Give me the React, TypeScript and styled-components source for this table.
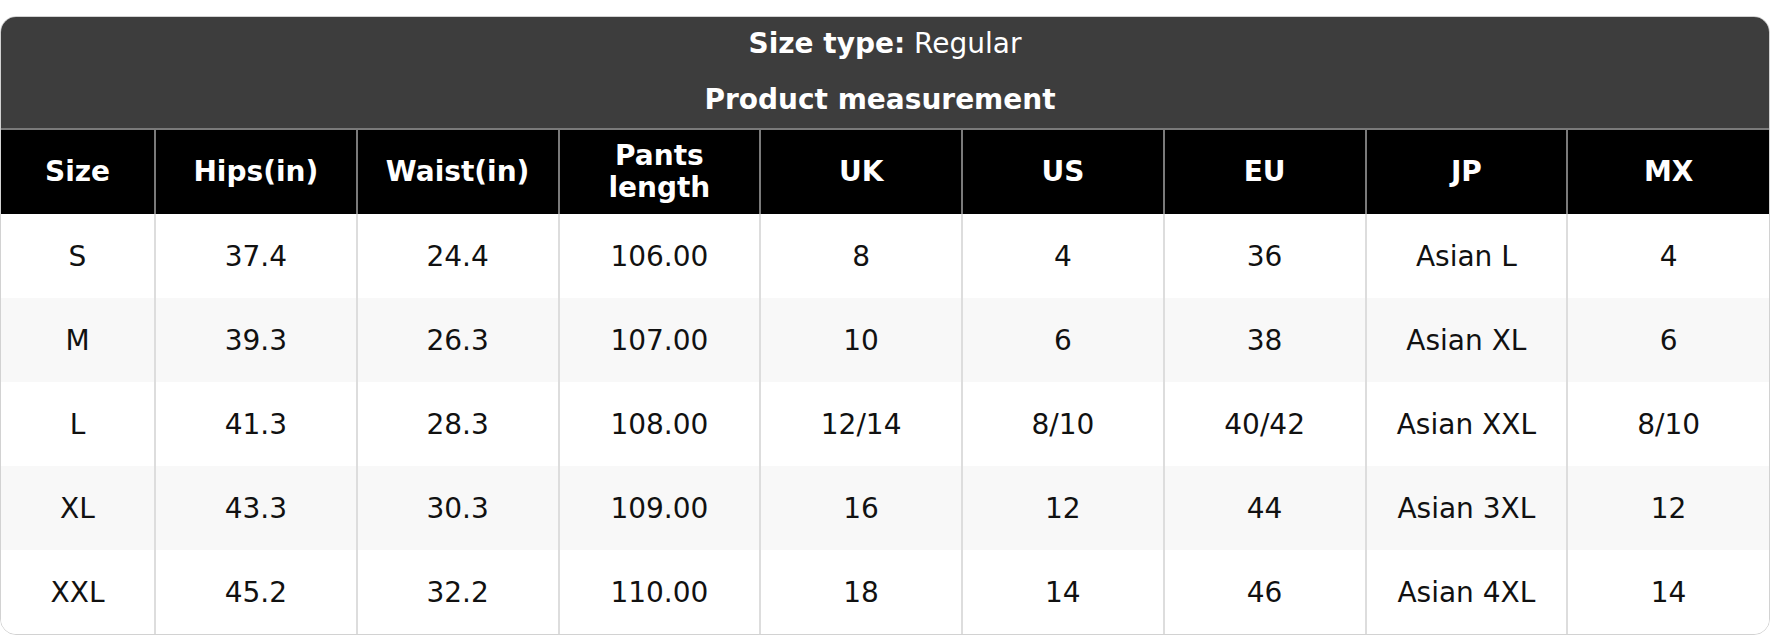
import styled, { createGlobalStyle } from "styled-components";

const GlobalStyle = createGlobalStyle`
  body {
    margin: 0;
    background: #ffffff;
    font-family: "DejaVu Sans", "Liberation Sans", sans-serif;
  }
`;

interface SizeRow {
  size: string;
  hips: string;
  waist: string;
  length: string;
  uk: string;
  us: string;
  eu: string;
  jp: string;
  mx: string;
}

const columns = ["Size", "Hips(in)", "Waist(in)", "Pants length", "UK", "US", "EU", "JP", "MX"];

const rows: SizeRow[] = [
  { size: "S", hips: "37.4", waist: "24.4", length: "106.00", uk: "8", us: "4", eu: "36", jp: "Asian L", mx: "4" },
  { size: "M", hips: "39.3", waist: "26.3", length: "107.00", uk: "10", us: "6", eu: "38", jp: "Asian XL", mx: "6" },
  { size: "L", hips: "41.3", waist: "28.3", length: "108.00", uk: "12/14", us: "8/10", eu: "40/42", jp: "Asian XXL", mx: "8/10" },
  { size: "XL", hips: "43.3", waist: "30.3", length: "109.00", uk: "16", us: "12", eu: "44", jp: "Asian 3XL", mx: "12" },
  { size: "XXL", hips: "45.2", waist: "32.2", length: "110.00", uk: "18", us: "14", eu: "46", jp: "Asian 4XL", mx: "14" },
];

export default function App() {
  return (
    <Page>
      <GlobalStyle />
      <Card>
        <TitleBar>
          <TitleLine>
            <strong>Size type:</strong> Regular
          </TitleLine>
          <TitleLine $bold $shift={10}>Product measurement</TitleLine>
        </TitleBar>
        <Table>
          <colgroup>
            <col style={{ width: 154 }} />
            {columns.slice(1).map((c) => (
              <col key={c} />
            ))}
          </colgroup>
          <thead>
            <tr>
              {columns.map((c) => (
                <Th key={c}>{c === "Pants length" ? <>Pants<br />length</> : c}</Th>
              ))}
            </tr>
          </thead>
          <tbody>
            {rows.map((r, i) => (
              <Tr key={r.size} $striped={i % 2 === 1}>
                <Td>{r.size}</Td>
                <Td>{r.hips}</Td>
                <Td>{r.waist}</Td>
                <Td>{r.length}</Td>
                <Td>{r.uk}</Td>
                <Td>{r.us}</Td>
                <Td>{r.eu}</Td>
                <Td>{r.jp}</Td>
                <Td>{r.mx}</Td>
              </Tr>
            ))}
          </tbody>
        </Table>
      </Card>
    </Page>
  );
}

const Page = styled.div`
  padding-top: 16px;
  width: 1770px;
`;

const Card = styled.div`
  border: 1px solid #d2d2d2;
  border-radius: 16px;
  overflow: hidden;
  background: #ffffff;
`;

const TitleBar = styled.div`
  background: #3d3d3d;
  color: #ffffff;
  text-align: center;
  padding: 10px 0 11px;
  display: flex;
  flex-direction: column;
  gap: 22px;
`;

const TitleLine = styled.div<{ $bold?: boolean; $shift?: number }>`
  font-size: 28px;
  line-height: 34px;
  font-weight: ${(p) => (p.$bold ? 700 : 400)};
  padding-right: ${(p) => p.$shift ?? 0}px;
  strong {
    font-weight: 700;
  }
`;

const Table = styled.table`
  width: 100%;
  border-collapse: collapse;
  table-layout: fixed;
`;

const Th = styled.th`
  background: #000000;
  color: #ffffff;
  font-size: 28px;
  font-weight: 700;
  line-height: 32px;
  height: 84px;
  padding: 0 8px;
  text-align: center;
  border-top: 2px solid #7a7a7a;
  border-left: 2px solid #7a7a7a;
  &:first-child {
    border-left: none;
  }
`;

const Tr = styled.tr<{ $striped: boolean }>`
  background: ${(p) => (p.$striped ? "#f8f8f8" : "#ffffff")};
`;

const Td = styled.td`
  height: 84px;
  padding: 0 8px;
  text-align: center;
  font-size: 28px;
  color: #111111;
  border-left: 2px solid #dddddd;
  &:first-child {
    border-left: none;
  }
`;
